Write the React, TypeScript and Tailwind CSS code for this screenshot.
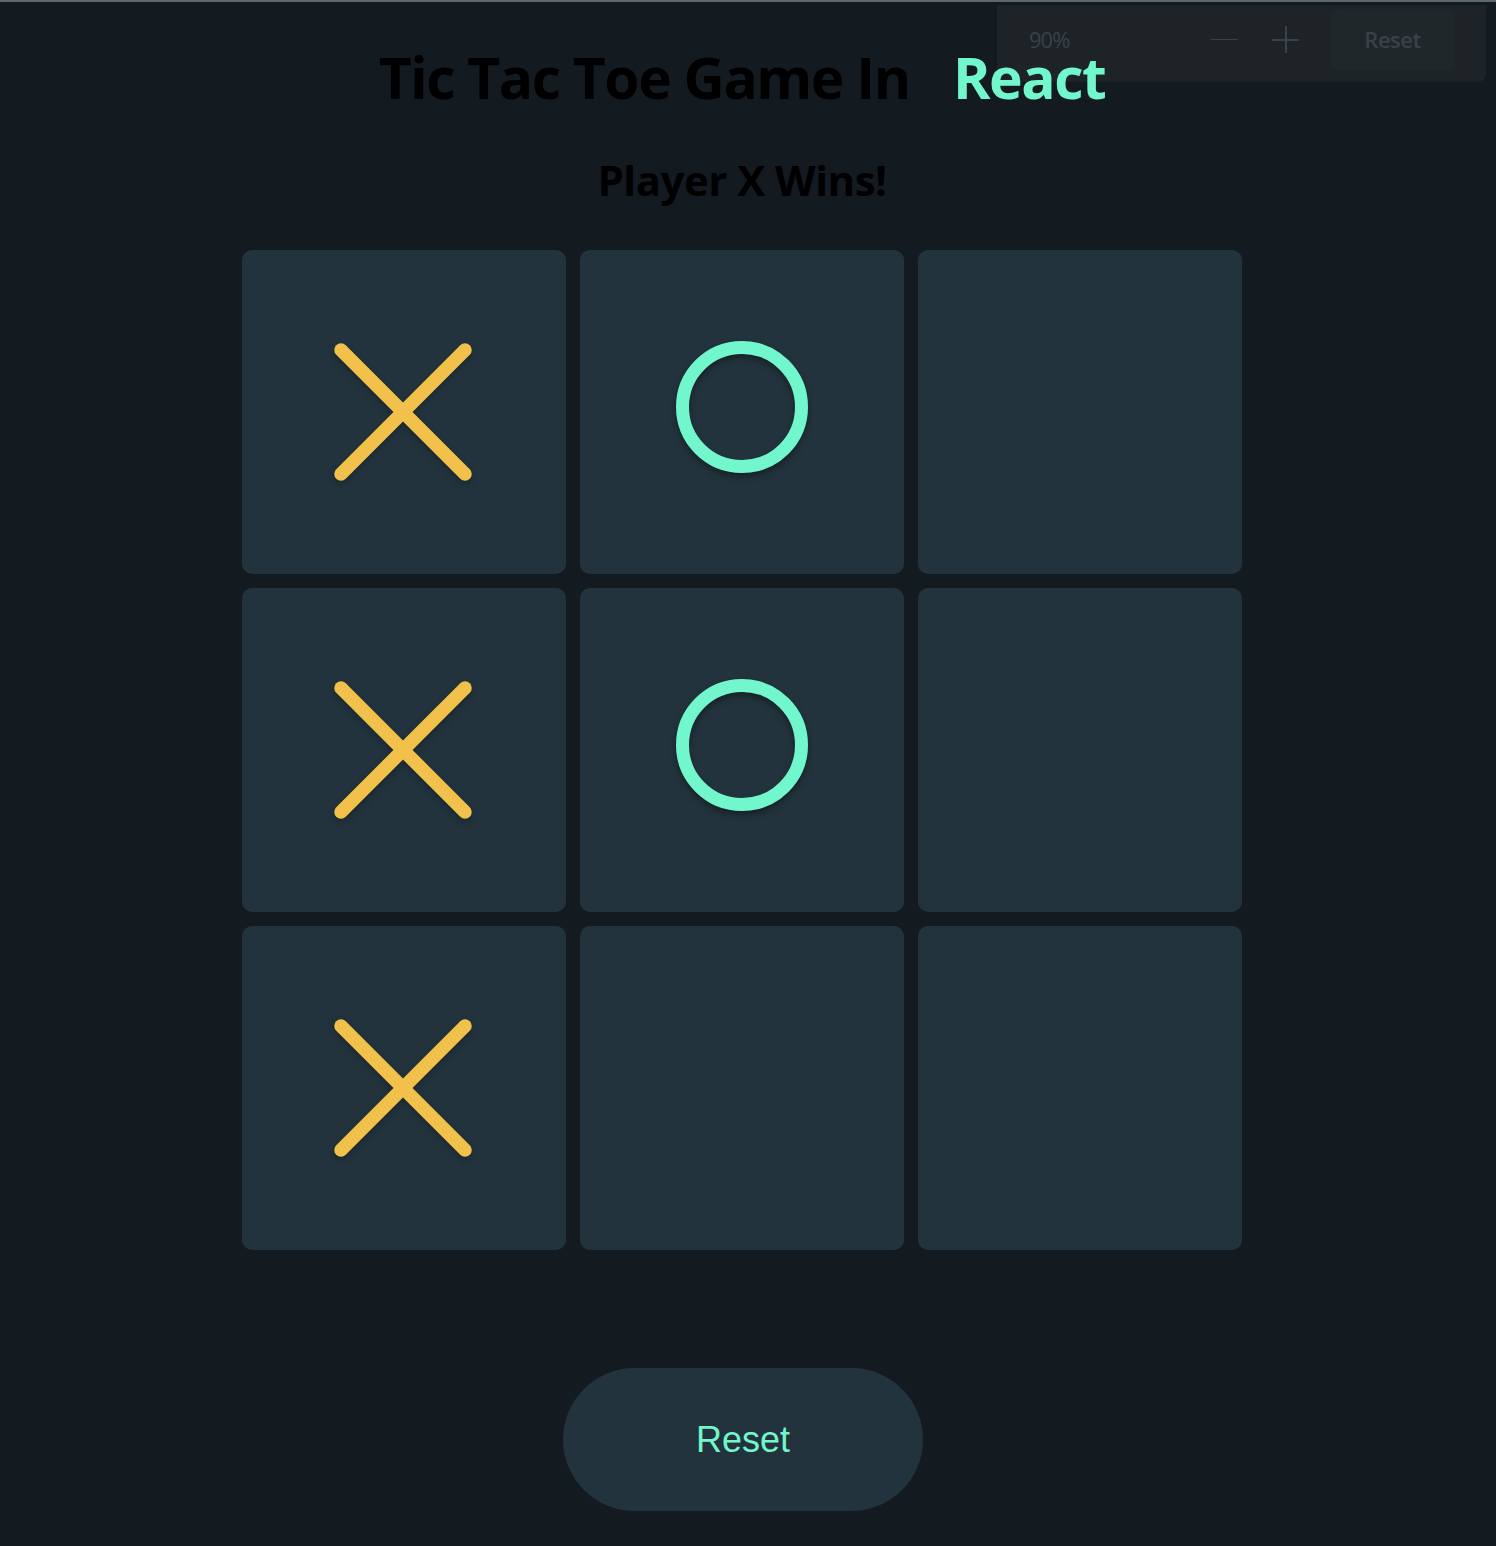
import React from "react"

type Mark = "X" | "O" | null

const board: Mark[] = ["X", "O", null, "X", "O", null, "X", null, null]

const XMark = () => (
  <svg width="138" height="138" viewBox="0 0 138 138" className="-ml-[2px] drop-shadow-[0_3px_3px_rgba(0,0,0,0.25)]">
    <g stroke="#f2c14c" strokeWidth="13.5" strokeLinecap="round">
      <line x1="7" y1="7" x2="131" y2="131" />
      <line x1="131" y1="7" x2="7" y2="131" />
    </g>
  </svg>
)

const OMark = () => (
  <svg width="136" height="136" viewBox="0 0 136 136" className="-mt-[10px] drop-shadow-[0_4px_3px_rgba(0,0,0,0.35)]">
    <circle cx="68" cy="68" r="59.5" fill="none" stroke="#72f6cb" strokeWidth="13" />
  </svg>
)

const ZoomBar = () => (
  <div className="absolute left-[997px] top-[3px] w-[489px] h-[77px] pb-[8px] rounded-b-lg bg-[#1d2327] flex items-center pl-[32px] pr-[32px] text-[#3a4248] font-['Open_Sans',sans-serif]">
    <span className="text-[22px] tracking-[-1px] w-[182px]">90%</span>
    <div className="flex items-center gap-[34px]">
      <div className="w-[27px] h-[1.5px] bg-[#3a4248]" />
      <div className="relative w-[27px] h-[27px]">
        <div className="absolute left-0 top-[13px] w-[27px] h-[1.5px] bg-[#3a4248]" />
        <div className="absolute top-0 left-[13px] h-[27px] w-[1.5px] bg-[#3a4248]" />
      </div>
    </div>
    <div className="ml-auto w-[123px] h-[61px] bg-[#20272b] rounded-md flex items-center justify-center text-[22px] tracking-[-0.5px] font-semibold">
      Reset
    </div>
  </div>
)

export default function App() {
  return (
    <div className="relative min-h-[1546px] bg-[#131a20] border-t-2 border-[#5d686b]">
      <ZoomBar />
      <div className="w-[1484px] flex flex-col items-center">
        <h1 className="relative z-10 mt-[40px] text-[57px] leading-[70px] font-bold text-black font-['Open_Sans',sans-serif] tracking-[-1.5px]">
          Tic Tac Toe Game In <span className="ml-[30px] text-[#72f6cb]">React</span>
        </h1>
        <h2 className="mt-[42px] text-[42px] leading-[52px] font-bold text-black font-['Open_Sans',sans-serif] tracking-[-0.5px]">
          Player X Wins!
        </h2>
        <div className="mt-[44px] grid grid-cols-[repeat(3,324px)] grid-rows-[repeat(3,324px)] gap-[14px]">
          {board.map((m, i) => (
            <div key={i} className="bg-[#22333d] rounded-[10px] flex items-center justify-center">
              {m === "X" && <XMark />}
              {m === "O" && <OMark />}
            </div>
          ))}
        </div>
        <button className="mt-[118px] ml-[2px] w-[360px] h-[143px] rounded-full bg-[#22333d] text-[#72f6cb] text-[36px] font-['Liberation_Sans',Arial,sans-serif]">
          Reset
        </button>
      </div>
    </div>
  )
}
